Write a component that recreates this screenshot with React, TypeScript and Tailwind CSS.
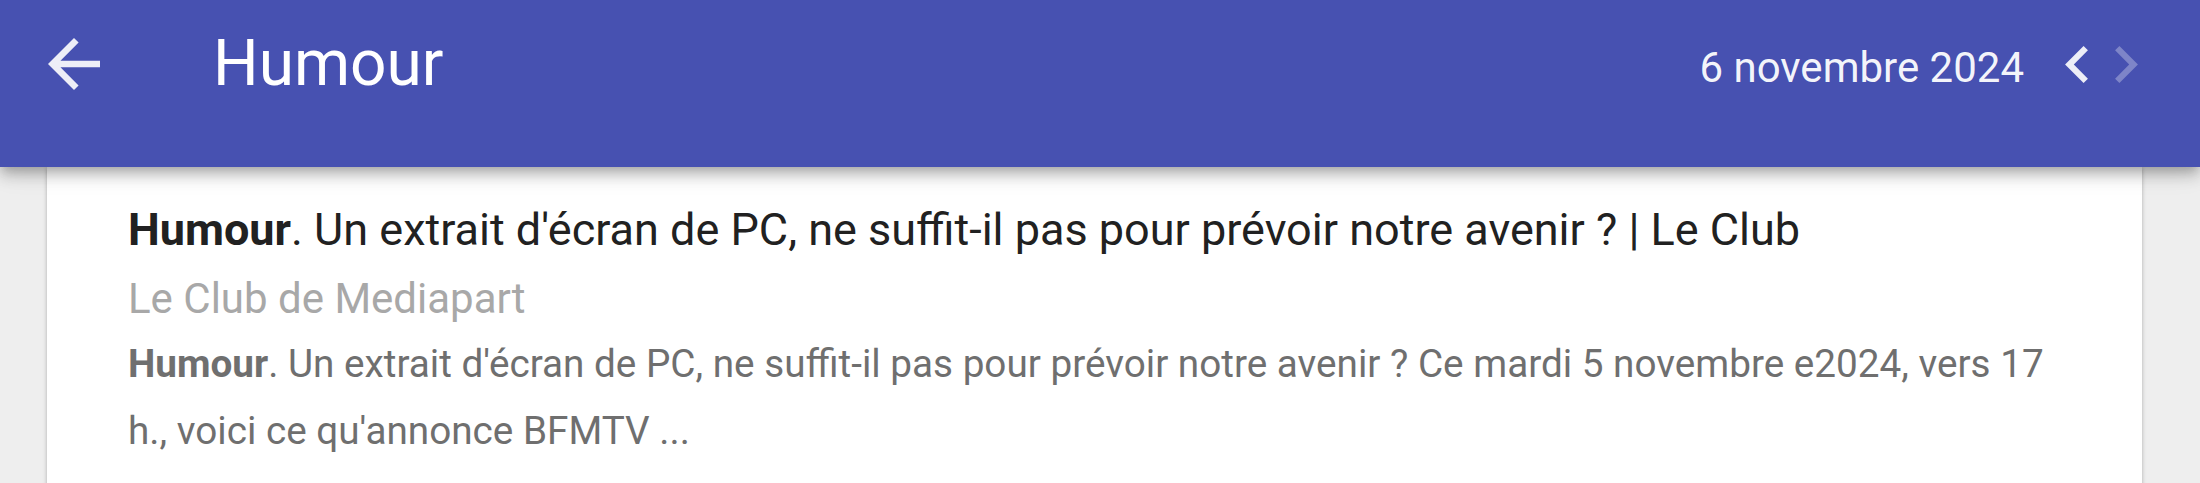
import React from "react";

export default function App() {
  return (
    <div
      className="relative w-full h-[483px] overflow-hidden bg-[#eeeeee]"
      style={{ fontFamily: "Roboto, 'Noto Sans', sans-serif" }}
    >
      <header className="relative z-10 h-[167px] bg-[#4751b1] text-white shadow-[0_5px_10px_-3px_rgba(0,0,0,0.2),0_10px_13px_0_rgba(0,0,0,0.14),0_3px_26px_0_rgba(0,0,0,0.12)]">
        <div className="flex h-[128px] items-center">
          <svg
            className="ml-[48px] h-[52px] w-[52px] shrink-0 text-white/90"
            viewBox="4 4 16 16"
            fill="currentColor"
          >
            <path d="M20 11H7.83l5.59-5.59L12 4l-8 8 8 8 1.41-1.41L7.83 13H20v-2z" />
          </svg>
          <h1 className="ml-[113px] mb-[1px] text-[64px] font-normal leading-none">Humour</h1>
          <div className="flex-1" />
          <span className="mt-[7px] text-[42px] leading-none text-white/95">6 novembre 2024</span>
          <svg
            className="ml-[41px] h-[37px] w-[23px] shrink-0 text-white/90"
            viewBox="8 6 7.41 12"
            fill="currentColor"
          >
            <path d="M15.41 7.41L14 6l-6 6 6 6 1.41-1.41L10.83 12z" />
          </svg>
          <svg
            className="ml-[27px] mr-[62px] h-[37px] w-[23px] shrink-0 text-white/30"
            viewBox="8.59 6 7.41 12"
            fill="currentColor"
          >
            <path d="M10 6L8.59 7.41 13.17 12l-4.58 4.59L10 18l6-6z" />
          </svg>
        </div>
      </header>

      <div className="ml-[47px] w-[2095px] bg-white shadow-[0_1px_4px_rgba(0,0,0,0.28)] pl-[81px] pr-[81px] pt-[36px] pb-[60px]">
        <div className="text-[45px] leading-[53px] text-[#212121]">
          <b className="font-bold">Humour</b>. Un extrait d'écran de PC, ne suffit-il pas pour prévoir notre avenir ? | Le Club
        </div>
        <div className="mt-[18px] text-[42px] leading-[50px] text-[#a8a8a8]">Le Club de Mediapart</div>
        <div className="mt-[6px] text-[38.7px] leading-[67px] text-[#6f6f6f]">
          <b className="font-bold">Humour</b>. Un extrait d'écran de PC, ne suffit-il pas pour prévoir notre avenir ? Ce mardi 5 novembre e2024, vers 17 h., voici ce qu'annonce BFMTV ...
        </div>
      </div>
    </div>
  );
}
